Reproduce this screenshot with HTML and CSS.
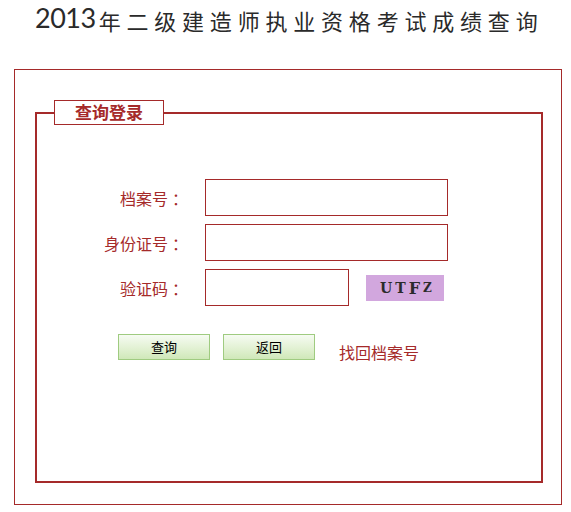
FILE: index.html
```html
<!DOCTYPE html>
<html lang="zh-CN">
<head>
<meta charset="utf-8">
<title>2013年二级建造师执业资格考试成绩查询</title>
<link rel="stylesheet" href="styles.css">
</head>
<body>
<div class="page">
  <h1 class="title"><span class="year">2013</span><span class="cn">年二级建造师执业资格考试成绩查询</span></h1>
  <div class="outer">
    <fieldset class="login">
      <legend class="legend"><span class="legend-text">查询登录</span></legend>
      <div class="form">
        <label class="lbl">档案号<span class="colon">：</span></label>
        <div class="field"><input class="inp" type="text"></div>
        <label class="lbl">身份证号<span class="colon">：</span></label>
        <div class="field"><input class="inp" type="text"></div>
        <label class="lbl">验证码<span class="colon">：</span></label>
        <div class="field">
          <input class="inp inp-short" type="text">
          <span class="captcha"><span class="c1">U</span><span class="c2">T</span><span class="c3">F</span><span class="c4">Z</span></span>
        </div>
      </div>
      <div class="actions">
        <button class="btn" type="button">查询</button>
        <button class="btn" type="button">返回</button>
        <a class="link" href="#">找回档案号</a>
      </div>
    </fieldset>
  </div>
</div>
</body>
</html>
```

FILE: styles.css
```css
html, body {
  margin: 0;
  padding: 0;
  background: #ffffff;
}

body {
  font-family: "Noto Sans CJK SC", "Noto Sans", sans-serif;
}

.page {
  width: 571px;
  height: 512px;
  padding: 0 9px 0 14px;
  box-sizing: border-box;
}

.title {
  margin: 0;
  height: 36px;
  padding-left: 21px;
  display: flex;
  align-items: baseline;
  font-weight: normal;
  color: #2a2a2a;
  line-height: 36px;
  margin-bottom: 33px;
  white-space: nowrap;
}

.year {
  font-family: "Lato", "Open Sans", sans-serif;
  font-size: 27px;
  letter-spacing: -0.5px;
  margin-right: 3px;
}

.cn {
  font-family: "Noto Sans CJK SC", sans-serif;
  font-size: 22px;
  letter-spacing: 5.8px;
  position: relative;
  top: 2px;
}

.outer {
  width: 548px;
  height: 436px;
  box-sizing: border-box;
  border: 1px solid #a52a2a;
  padding-top: 30px;
}

.login {
  margin: 0 0 0 20px;
  width: 508px;
  height: 383px;
  box-sizing: border-box;
  border: 2px solid #a52a2a;
  padding: 0 0 0 15px;
}

.legend {
  margin: 0 2px;
  padding: 0;
  width: 110px;
  height: 25px;
  box-sizing: border-box;
  border: 1px solid #a52a2a;
  background: #fff;
  text-align: left;
}

.legend-text {
  display: block;
  text-align: center;
  font-size: 17px;
  font-weight: bold;
  line-height: 22px;
  color: #a52a2a;
}

.form {
  margin-top: 54px;
  display: grid;
  grid-template-columns: 136px 243px;
  grid-auto-rows: 37px;
  column-gap: 17px;
  row-gap: 8px;
  align-items: center;
}

.lbl {
  text-align: right;
  font-size: 16px;
  color: #a52a2a;
  white-space: nowrap;
}

.colon {
  margin-left: 4px;
}

.field {
  display: flex;
  align-items: center;
  height: 37px;
}

.inp {
  width: 243px;
  height: 37px;
  box-sizing: border-box;
  border: 1px solid #a52a2a;
  margin: 0;
  padding: 0 4px;
  outline: none;
  background: #fff;
}

.inp-short {
  width: 144px;
}

.captcha {
  margin-left: 17px;
  width: 78px;
  height: 26px;
  background: #d2a7de;
  display: flex;
  align-items: center;
  justify-content: center;
  font-family: "DejaVu Serif", "Liberation Serif", serif;
  font-weight: bold;
  color: #2b2b2b;
  letter-spacing: 3px;
  padding-left: 2px;
  box-sizing: border-box;
}

.c1 { font-size: 14px; }
.c2 { font-size: 14px; }
.c3 { font-size: 16px; position: relative; top: 1px; }
.c4 { font-size: 12px; letter-spacing: 0; }

.actions {
  margin-top: 24px;
  margin-left: 66px;
  display: flex;
  align-items: center;
}

.btn {
  width: 92px;
  height: 26px;
  box-sizing: border-box;
  border: 1px solid #9fcb80;
  background: linear-gradient(to bottom, #f6fbf2 0%, #e4f2d6 50%, #cfe8b8 100%);
  font-family: "Noto Sans CJK SC", sans-serif;
  font-size: 13px;
  color: #000;
  padding: 0;
  margin: 0 13px 0 0;
  line-height: 24px;
}

.link {
  margin-left: 11px;
  margin-top: 10px;
  font-size: 16px;
  color: #a52a2a;
  text-decoration: none;
}
```
